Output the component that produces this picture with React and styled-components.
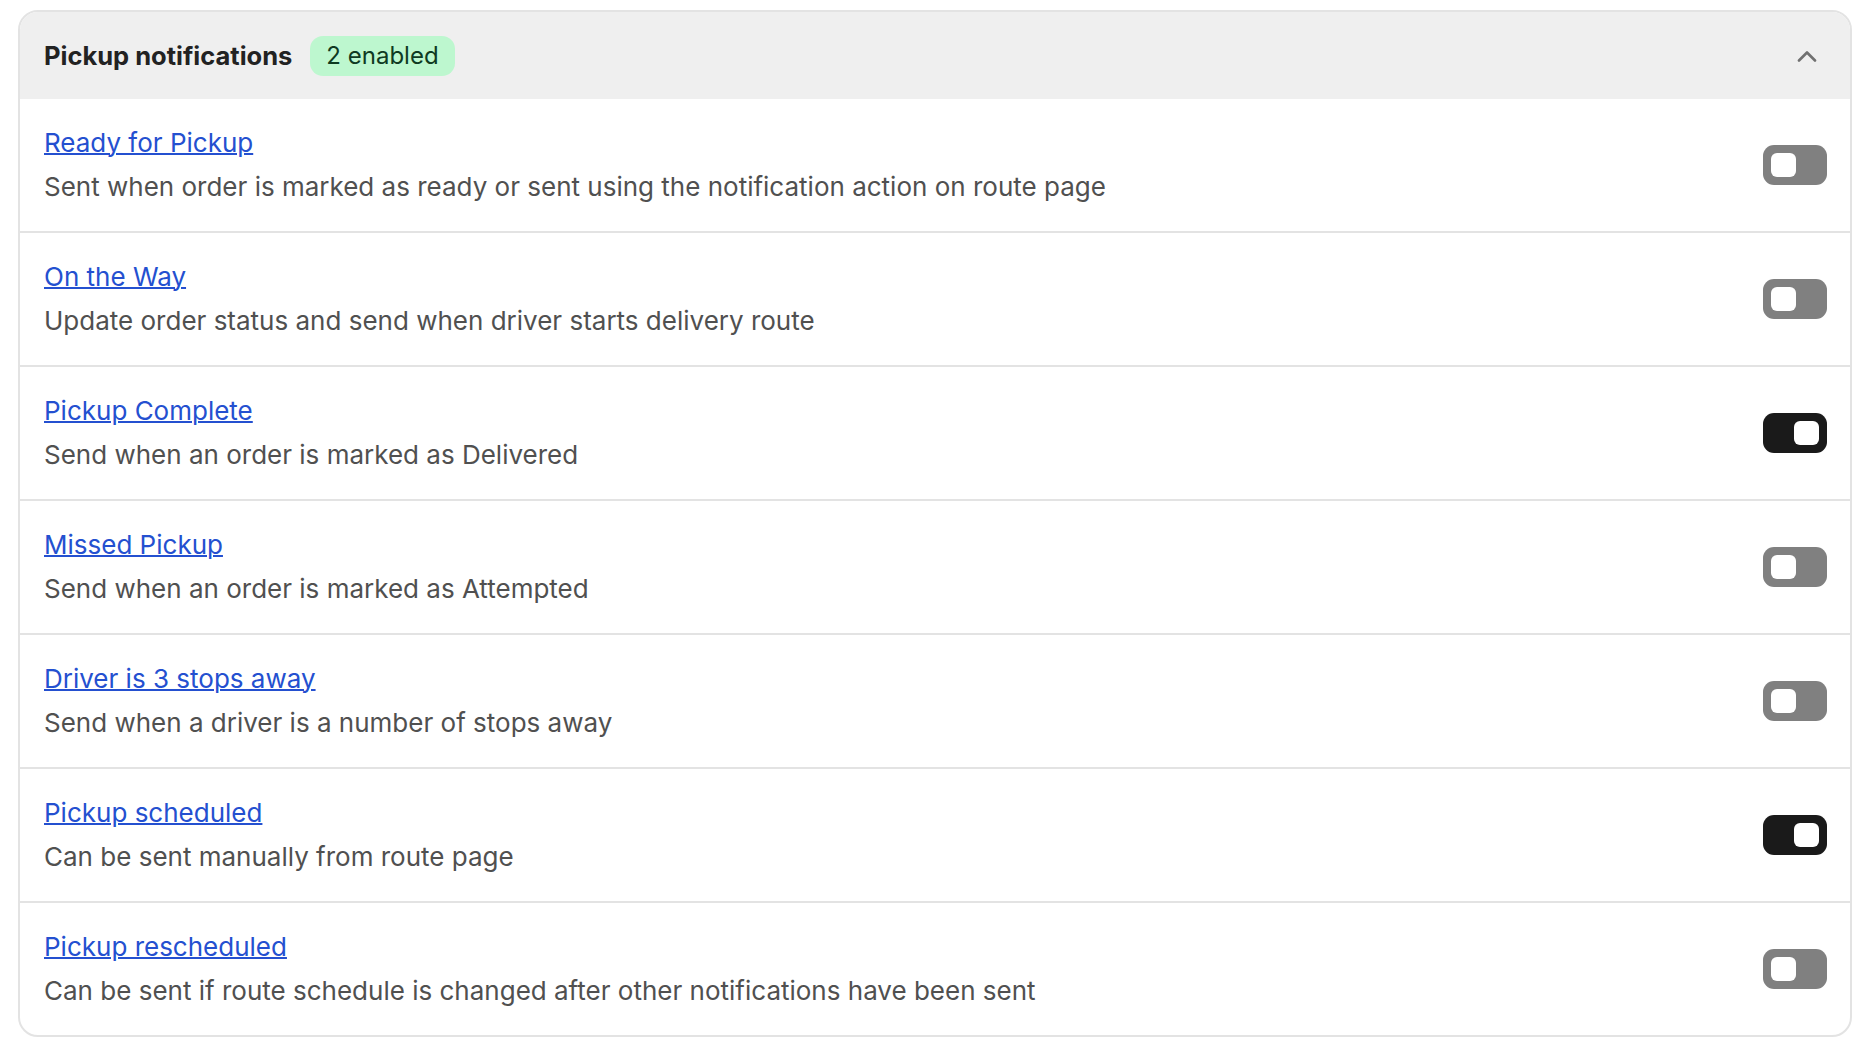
import React from 'react';
import styled, { createGlobalStyle } from 'styled-components';

const GlobalStyle = createGlobalStyle`
  html, body {
    margin: 0;
    padding: 0;
    background: #fff;
    font-family: Inter, "Noto Sans", "Liberation Sans", sans-serif;
  }
`;

const Page = styled.div`
  padding: 10px 22px 18px 18px;
`;

const Card = styled.section`
  border: 2px solid #e3e3e3;
  border-radius: 20px;
  overflow: hidden;
  background: #fff;
`;

const Header = styled.header`
  display: flex;
  align-items: center;
  height: 87px;
  padding: 0 33px 0 24px;
  background: #efefef;
`;

const Title = styled.h2`
  margin: 0;
  font-size: 25.5px;
  font-weight: 700;
  color: #222;
`;

const Badge = styled.span`
  display: inline-flex;
  align-items: center;
  height: 40px;
  margin-left: 18px;
  padding: 0 16px;
  border-radius: 13px;
  background: #bdf7cf;
  color: #0e3a22;
  font-size: 24px;
`;

const Chevron = styled.svg`
  margin-left: auto;
  width: 20px;
  height: 12px;
`;

const Row = styled.div`
  display: flex;
  align-items: center;
  padding: 26px 23px 26px 24px;
  border-bottom: 2px solid #e3e3e3;

  &:last-child {
    border-bottom: none;
  }
`;

const Info = styled.div`
  display: flex;
  flex-direction: column;
  gap: 8px;
  flex: 1;
`;

const Link = styled.a`
  align-self: flex-start;
  font-size: 26px;
  line-height: 36px;
  color: #2450d0;
  text-decoration: underline;
  text-decoration-thickness: 1.5px;
  cursor: pointer;
`;

const Desc = styled.p`
  margin: 0;
  font-size: 26px;
  line-height: 36px;
  color: #505050;
`;

const Toggle = styled.button`
  display: flex;
  align-items: center;
  justify-content: ${(p) => (p.$on ? 'flex-end' : 'flex-start')};
  width: 64px;
  height: 40px;
  padding: 0 8px;
  border: none;
  border-radius: 11px;
  background: ${(p) => (p.$on ? '#1a1a1a' : '#808080')};
  cursor: pointer;
`;

const Knob = styled.span`
  width: 25px;
  height: 24px;
  border-radius: 6px;
  background: #fff;
`;

const notifications = [
  { title: 'Ready for Pickup', desc: 'Sent when order is marked as ready or sent using the notification action on route page', on: false },
  { title: 'On the Way', desc: 'Update order status and send when driver starts delivery route', on: false },
  { title: 'Pickup Complete', desc: 'Send when an order is marked as Delivered', on: true },
  { title: 'Missed Pickup', desc: 'Send when an order is marked as Attempted', on: false },
  { title: 'Driver is 3 stops away', desc: 'Send when a driver is a number of stops away', on: false },
  { title: 'Pickup scheduled', desc: 'Can be sent manually from route page', on: true },
  { title: 'Pickup rescheduled', desc: 'Can be sent if route schedule is changed after other notifications have been sent', on: false },
];

const App = () => {
  const enabled = notifications.filter((n) => n.on).length;

  return (
    <Page>
      <GlobalStyle />
      <Card>
        <Header>
          <Title>Pickup notifications</Title>
          <Badge>{enabled} enabled</Badge>
          <Chevron viewBox="0 0 20 12" fill="none">
            <path d="M2 10.5 L10 2.5 L18 10.5" stroke="#707070" strokeWidth="2.6" strokeLinecap="round" strokeLinejoin="round" />
          </Chevron>
        </Header>
        {notifications.map((n) => (
          <Row key={n.title}>
            <Info>
              <Link>{n.title}</Link>
              <Desc>{n.desc}</Desc>
            </Info>
            <Toggle $on={n.on} aria-pressed={n.on}>
              <Knob />
            </Toggle>
          </Row>
        ))}
      </Card>
    </Page>
  );
};

export default App;
